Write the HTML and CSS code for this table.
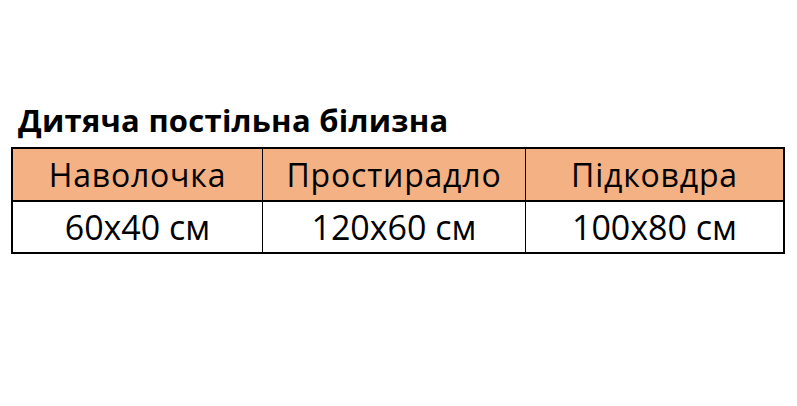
FILE: index.html
```html
<!DOCTYPE html>
<html lang="uk">
<head>
<meta charset="utf-8">
<link rel="stylesheet" href="styles.css">
</head>
<body>
<div class="page">
  <h1 class="title">Дитяча постільна білизна</h1>
  <table class="sizes">
    <tr class="head">
      <td class="c1">Наволочка</td>
      <td class="c2">Простирадло</td>
      <td class="c3">Підковдра</td>
    </tr>
    <tr class="data">
      <td>60x40 см</td>
      <td>120x60 см</td>
      <td>100x80 см</td>
    </tr>
  </table>
</div>
</body>
</html>
```

FILE: styles.css
```css
html, body {
  margin: 0;
  padding: 0;
  background: #ffffff;
}
.page {
  padding: 99px 0 0 11px;
  font-family: "Open Sans", "Noto Sans", sans-serif;
  color: #000;
}
.title {
  margin: 0 0 6px 7px;
  font-size: 31px;
  font-weight: 700;
  line-height: 42px;
  letter-spacing: 0.25px;
}
.sizes {
  border-collapse: collapse;
  border: 2px solid #000;
}
.sizes td {
  text-align: center;
  padding: 0;
  border-left: 1px solid #000;
  border-right: 1px solid #000;
}
.head td {
  background: #f4b183;
  height: 51px;
  font-size: 32px;
  letter-spacing: 0.8px;
  border-bottom: 2px solid #000;
}
.data td {
  height: 50px;
  font-size: 34px;
}
.c1 { width: 249px; }
.c2 { width: 262px; }
.c3 { width: 257px; }
```
